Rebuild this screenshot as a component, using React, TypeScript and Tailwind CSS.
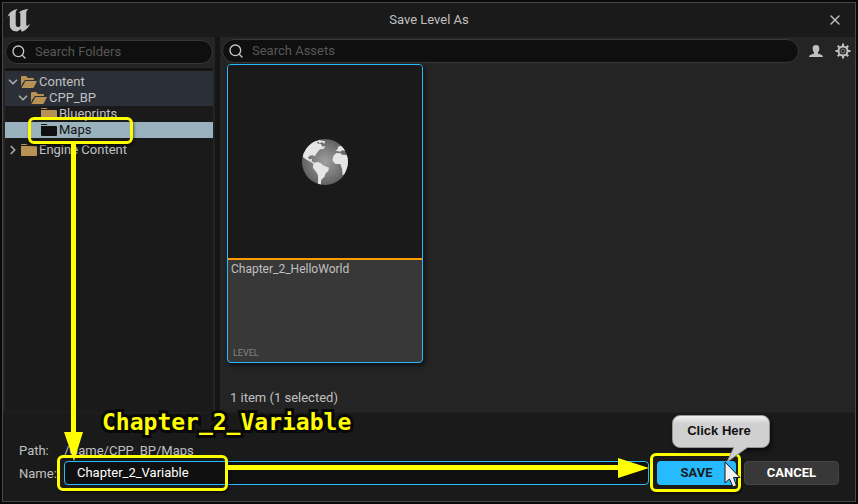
import type { ReactNode } from "react";
import { Search, ChevronDown, ChevronRight, X } from "lucide-react";

function UnrealLogo() {
  return (
    <svg viewBox="22 24 72 70" className="h-[23px] w-6" fill="#c4c4c4" aria-label="Unreal Engine">
      <path d="M23 49C26 36 37 27 54 24C50 28 48 31 48 38V70C48 76 51 79 55 79C58 79 61 77 62 74V39C62 35 60 34 56 37C62 29 73 25 87 24C82 28 80 32 80 37V71C80 76 84 77 92 68C88 80 79 89 67 93L62 85C58 91 53 93 47 92C37 91 30 84 30 73V48C30 42 27 42 23 49Z" />
    </svg>
  );
}

function Folder({ open = false, dark = false }: { open?: boolean; dark?: boolean }) {
  return (
    <svg viewBox="1 0 17 14" className="h-[14px] w-[17px] shrink-0" fill={dark ? "#111111" : "#b89155"} aria-hidden="true">
      {open ? (
        <>
          <path d="M1 2Q1 1 2 1H6L8 3H13Q14 3 14 4V5H5L2 9L1 12Z" />
          <path d="M5.500 6H17L14 12Q13.500 13 13 13H1.500Z" />
        </>
      ) : (
        <path d="M1 1.500Q1 1 2 1H6L8 2H1ZM1 3H16Q17 3 17 4V12Q17 13 16 13H2Q1 13 1 12Z" />
      )}
    </svg>
  );
}

function Globe() {
  return (
    <svg viewBox="246 327 138 138" className="h-[46px] w-[46px]" role="img" aria-label="Level">
      <defs>
        <radialGradient id="sea">
          <stop offset="0" stopColor="#a0a0a0" />
          <stop offset="1" stopColor="#626262" />
        </radialGradient>
        <clipPath id="disc"><circle cx="315" cy="396" r="69" /></clipPath>
      </defs>
      <circle cx="315" cy="396" r="69" fill="url(#sea)" />
      <g fill="#e6e6e6" clipPath="url(#disc)">
        <path d="M246 378L254 356L270 340L286 332L297 333L290 340L303 342L307 350L316 348L311 357L300 358L288 372L285 379L278 376L269 377L264 383L268 388L276 387L275 394L284 399L278 400L266 392L256 387Z" />
        <path d="M293 329L315 334L314 341L306 337L298 340Z" />
        <path d="M280 399L291 396L301 398L308 405L327 413L325 423L317 430L313 441L304 449L302 465L294 461L294 436L289 426L279 414Z" />
        <path d="M345 362L353 358L354 350L363 347L373 354L376 364L367 361L360 365L352 363Z" />
        <path d="M341 376L350 369L362 370L366 374L384 375V408L374 432L368 436L366 416L361 402L346 402L337 391Z" />
      </g>
    </svg>
  );
}

function SearchBox({ id, label, className }: { id: string; label: string; className: string }) {
  return (
    <div className={`flex h-6 items-center gap-2 rounded-full border border-[#383838] bg-[#0f0f0f] px-[5px] ${className}`}>
      <label htmlFor={id} aria-label={label} className="shrink-0">
        <Search className="size-4 text-[#c8c8c8]" strokeWidth={2} aria-hidden="true" />
      </label>
      <input id={id} type="text" aria-label={label} placeholder={label} className="w-full min-w-0 bg-transparent text-[13px] outline-none placeholder:text-[#575757]" />
    </div>
  );
}

function TreeRow({ className, children }: { className: string; children: ReactNode }) {
  return <button type="button" className={`flex w-full items-center text-left text-[13px] ${className}`}>{children}</button>;
}

function Highlight({ className }: { className: string }) {
  return <div aria-hidden="true" className={`pointer-events-none absolute rounded-md border-3 border-[#ffff00] shadow-[1px_2px_3px_#0008] ${className}`} />;
}

export default function App() {
  return (
    <div className="relative flex min-h-screen flex-col bg-[#080808] p-[2px] font-['Roboto',sans-serif] text-[13px] text-[#c0c0c0]">
      <div className="flex grow flex-col border border-[#484848] bg-[#1a1a1a]">
        <header className="grid h-[34px] shrink-0 grid-cols-3 items-center px-1">
          <UnrealLogo />
          <h1 className="text-center">Save Level As</h1>
          <button type="button" aria-label="Close" className="mr-2 justify-self-end"><X className="size-4" strokeWidth={2} /></button>
        </header>

        <main className="flex grow bg-[#151515]">
          <aside className="flex w-[212px] shrink-0 flex-col bg-[#242424] px-[2px] pt-[3px]">
            <SearchBox id="folders" label="Search Folders" className="" />
            <nav aria-label="Folders" className="relative mt-1 grow border-t-3 border-[#151515] bg-[#1a1a1a]">
              <TreeRow className="h-[19px] bg-[#2b3038] pt-[3px] pl-px">
                <ChevronDown className="mr-px size-[14px] text-[#a8a8a8]" strokeWidth={3} /><Folder open /><span className="pl-px">Content</span>
              </TreeRow>
              <TreeRow className="h-4 bg-[#2b3038] pl-[11px]">
                <ChevronDown className="mr-px size-[14px] text-[#a8a8a8]" strokeWidth={3} /><Folder open /><span className="pl-px">CPP_BP</span>
              </TreeRow>
              <TreeRow className="h-4 pl-9"><Folder /><span className="pl-px">Blueprints</span></TreeRow>
              <TreeRow className="h-4 bg-[#9ab2bd] pl-9 text-[#111111]"><Folder dark /><span className="pl-px">Maps</span></TreeRow>
              <TreeRow className="h-6 pl-px">
                <ChevronRight className="mr-px size-[14px] text-[#a8a8a8]" strokeWidth={3} /><Folder /><span className="pl-px">Engine Content</span>
              </TreeRow>
              <Highlight className="top-[46px] left-[23px] h-[27px] w-[105px]" />
            </nav>
          </aside>

          <section aria-label="Assets" className="ml-[5px] flex grow flex-col bg-[#242424]">
            <div className="flex items-center gap-[11px] pt-[2px] pr-1 pl-[2px]">
              <SearchBox id="assets" label="Search Assets" className="grow" />
              <button type="button" aria-label="Developer content" className="-ml-[2px]">
                <svg viewBox="0 0 16 14" className="h-[14px] w-4" fill="#c0c0c0"><path d="M8 1C5.500 1 4.500 2.500 4.700 5C4.800 7 5.700 8 6 8.500V9.500C5 10 1 10.500 1 13H15C15 10.500 11 10 10 9.500V8.500C10.300 8 11.200 7 11.300 5C11.500 2.500 10.500 1 8 1Z" /></svg>
              </button>
              <button type="button" aria-label="Settings">
                <svg viewBox="0 0 16 16" className="size-4" fill="none" stroke="#c0c0c0">
                  <circle cx="8" cy="8" r="4.500" strokeWidth="2" /><circle cx="8" cy="8" r="2" strokeWidth="1" stroke="#858585" />
                  <path strokeWidth="2" d="M8 .5V3M8 13V15.500M.5 8H3M13 8H15.500M2.700 2.700L4.500 4.500M11.500 11.500L13.300 13.300M2.700 13.300L4.500 11.500M11.500 4.500L13.300 2.700" />
                </svg>
              </button>
            </div>
            <div className="grow px-[7px]">
              <article className="mt-px flex h-[299px] w-[196px] flex-col overflow-hidden rounded border border-[#26bbff] bg-[#383838] shadow-[2px_3px_4px_#0008]">
                <div className="flex h-[193px] items-center justify-center bg-[#1a1a1a]"><Globe /></div>
                <div className="flex grow flex-col justify-between border-t-2 border-[#ff9c00] px-[3px] pt-px pb-[3px]">
                  <h2 className="text-xs leading-4">Chapter_2_HelloWorld</h2>
                  <p className="pl-[2px] text-[9px] leading-3 text-[#858585]">LEVEL</p>
                </div>
              </article>
            </div>
            <p className="px-[10px] pb-1 leading-5">1 item (1 selected)</p>
          </section>
        </main>

        <footer className="flex shrink-0 flex-col border-t border-[#202020] px-4 pt-7 pb-4">
          <dl className="flex h-5 items-center"><dt className="w-[45px]">Path:</dt><dd>/Game/CPP_BP/Maps</dd></dl>
          <div className="flex h-6 items-center">
            <label htmlFor="name" className="w-[45px] shrink-0 pt-[2px]">Name:</label>
            <div className="relative min-w-0 grow">
              <input id="name" type="text" defaultValue="Chapter_2_Variable" className="block h-6 w-full rounded border border-[#26bbff] bg-[#0f0f0f] px-3 pb-[2px] text-[13px] text-white outline-none" />
              <Highlight className="-top-[6px] -left-[7px] h-9 w-[171px]" />
              <svg aria-hidden="true" viewBox="0 0 421 22" preserveAspectRatio="none" className="pointer-events-none absolute -top-1 left-[164px] h-[22px] w-[calc(100%-164px)]" fill="#ffff00"><path d="M0 8H390V1L421 11L390 21V13H0Z" /></svg>
            </div>
            <div className="relative ml-2">
              <button type="button" className="block h-6 w-[79px] rounded bg-[#26bbff] text-[13px] font-bold text-[#1a1a1a]">SAVE</button>
              <Highlight className="-top-2 -left-[7px] h-[39px] w-[91px]" />
              <div aria-hidden="true" className="pointer-events-none absolute bottom-[37px] left-[15px] flex h-[33px] w-[98px] items-center justify-center rounded-lg border border-[#969696] bg-gradient-to-b from-[#f0f0f0] via-[#d0d0d0] via-25% to-[#d0d0d0] pr-1 pb-[2px] font-['Liberation_Sans',sans-serif] text-[13px] font-bold text-[#111111] shadow-[2px_3px_4px_#0008]">Click Here</div>
              <svg aria-hidden="true" viewBox="0 0 24 17" className="pointer-events-none absolute bottom-[22px] left-[69px] h-[17px] w-6"><path d="M8 1L1 16L22 1" fill="#d0d0d0" stroke="#969696" /></svg>
              <svg aria-hidden="true" viewBox="0 0 18 28" className="pointer-events-none absolute top-0 left-[67px] h-7 w-[18px]"><path d="M1 1V22L5.500 18L9 26L12.500 24.500L9.500 16.500H16Z" fill="#f2f2f2" stroke="#151515" /></svg>
            </div>
            <button type="button" className="ml-2 h-6 w-[95px] shrink-0 rounded border border-[#444444] bg-[#383838] text-[13px] font-bold text-white">CANCEL</button>
          </div>
        </footer>
      </div>
      <svg aria-hidden="true" viewBox="0 0 20 318" className="pointer-events-none absolute top-[143px] left-[64px] h-[318px] w-5" fill="#ffff00"><path d="M7 0H12V289H19L10 318L0 289H7Z" /></svg>
      <p className="pointer-events-none absolute bottom-[66px] left-[102px] font-['DejaVu_Sans_Mono',monospace] text-[23px] leading-8 font-bold text-[#ffff00] [-webkit-text-stroke:6px_#080808] [paint-order:stroke_fill]">Chapter_2_Variable</p>
    </div>
  );
}
